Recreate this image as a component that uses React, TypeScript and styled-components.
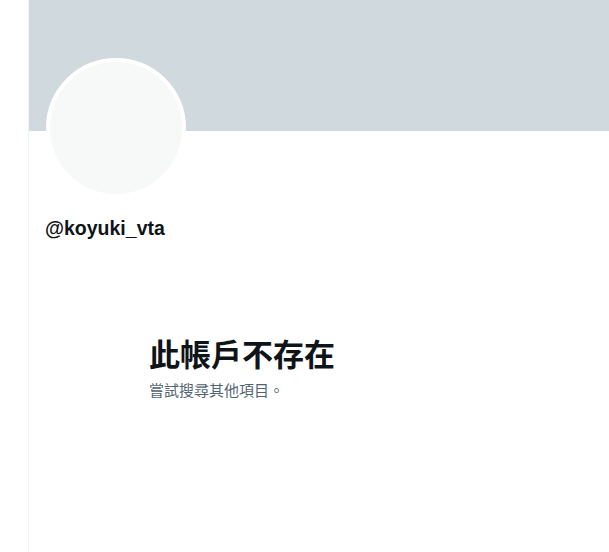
import React from 'react';
import styled, { createGlobalStyle } from 'styled-components';

const GlobalStyle = createGlobalStyle`
  html, body {
    margin: 0;
    padding: 0;
    background: #ffffff;
  }
  body {
    font-family: "Liberation Sans", "Noto Sans CJK TC", sans-serif;
    color: #0f1419;
  }
`;

const Page = styled.div`
  display: flex;
  min-height: 552px;
  overflow: hidden;
`;

const Gutter = styled.div`
  width: 28px;
  flex: none;
`;

const Column = styled.main`
  flex: 1;
  border-left: 1px solid #eff3f4;
  min-height: 552px;
`;

const Banner = styled.div`
  height: 131px;
  background-color: #cfd9de;
`;

const ProfileHeader = styled.div`
  padding: 0 16px 0 17px;
`;

const Avatar = styled.div`
  width: 132px;
  height: 132px;
  margin-top: -73px;
  border: 4px solid #ffffff;
  border-radius: 50%;
  background-color: #f7f9f9;
`;

const Handle = styled.div`
  margin: 18px 0 0 -1px;
  font-size: 19.5px;
  line-height: 24px;
  font-weight: 700;
  color: #0f1419;
`;

const EmptyState = styled.div`
  padding: 95px 0 0 120px;
`;

const EmptyTitle = styled.h2`
  margin: 0 0 9px;
  font-family: "Noto Sans CJK TC", sans-serif;
  font-size: 31px;
  line-height: 36px;
  font-weight: 700;
  color: #0f1419;
`;

const EmptyText = styled.p`
  margin: 0;
  font-family: "Noto Sans CJK TC", sans-serif;
  font-size: 15px;
  line-height: 20px;
  color: #536471;
`;

export default function App() {
  return (
    <>
      <GlobalStyle />
      <Page>
        <Gutter />
        <Column>
          <Banner />
          <ProfileHeader>
            <Avatar />
            <Handle>@koyuki_vta</Handle>
          </ProfileHeader>
          <EmptyState>
            <EmptyTitle>此帳戶不存在</EmptyTitle>
            <EmptyText>嘗試搜尋其他項目。</EmptyText>
          </EmptyState>
        </Column>
      </Page>
    </>
  );
}
